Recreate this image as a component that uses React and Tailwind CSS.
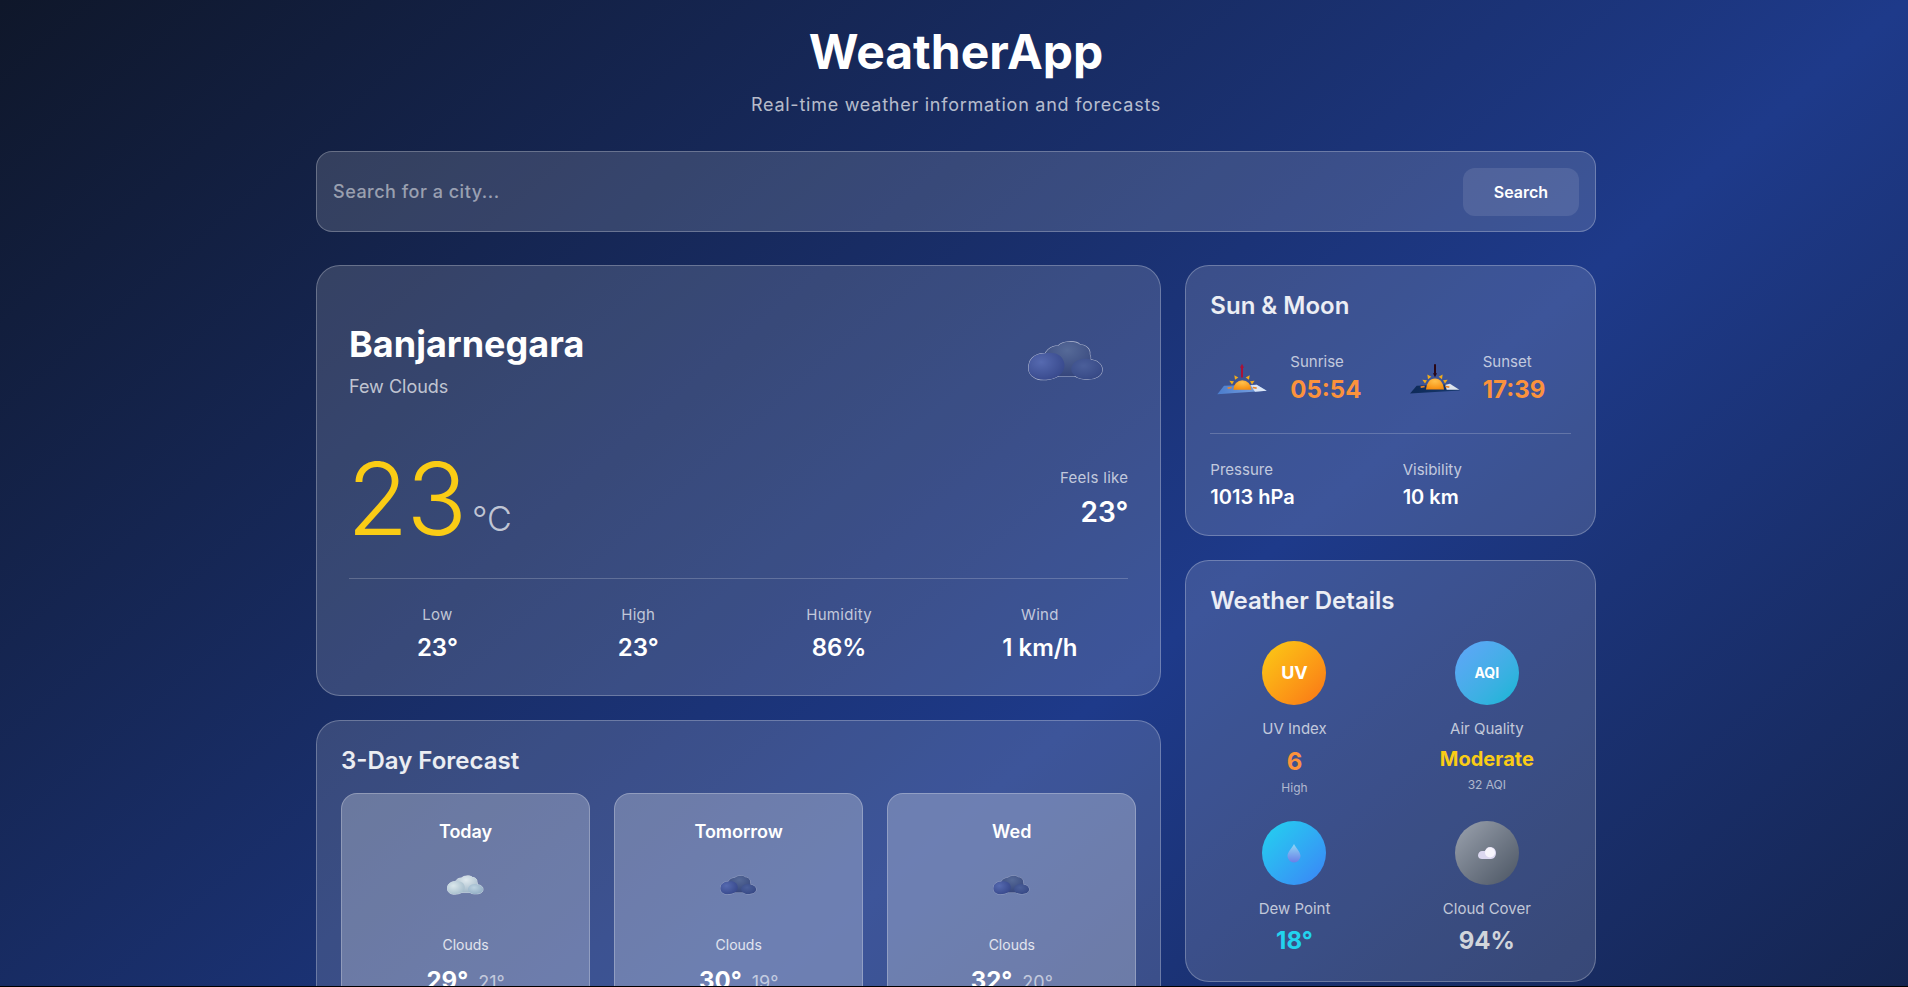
import React from "react";

const font = { fontFamily: "Inter, 'Liberation Sans', sans-serif" };

function Cloud({ kind = "dark", size = 80, className = "" }) {
  const id = "cl" + kind + size;
  const pal =
    kind === "dark"
      ? { t1: "#566a98", t2: "#33437a", l1: "#566ab0", l2: "#36478a", r1: "#4b5f9a", r2: "#354784", s: "#aeb6cf" }
      : { t1: "#dfe9ee", t2: "#9db4c5", l1: "#dbe8ec", l2: "#a3bbca", r1: "#bcd2e0", r2: "#8fabc2", s: "#e6ecf1" };
  const top = "M17 22 C16 12 24 6 32 6 C36 1 50 0 55 5 C61 5 66 10 65 15 C67 19 66 24 62 26 L50 38 L30 38 Z";
  const left = "M1 26 C2 18 10 14 18 14 C26 12 35 15 37 21 C40 26 38 34 33 37 C27 42 12 44 6 39 C1 36 0 31 1 26 Z";
  const right = "M47 26 C50 20 60 18 68 21 C74 22 79 27 78 32 C78 37 72 41 64 41 C56 42 49 39 47 35 C45 32 45 29 47 26 Z";
  return (
    <svg width={size} height={size * 0.55} viewBox="0 0 80 44" className={className}>
      <defs>
        <radialGradient id={id + "t"} cx="50%" cy="25%" r="80%">
          <stop offset="0%" stopColor={pal.t1} />
          <stop offset="100%" stopColor={pal.t2} />
        </radialGradient>
        <radialGradient id={id + "l"} cx="35%" cy="35%" r="75%">
          <stop offset="0%" stopColor={pal.l1} />
          <stop offset="100%" stopColor={pal.l2} />
        </radialGradient>
        <radialGradient id={id + "r"} cx="40%" cy="35%" r="75%">
          <stop offset="0%" stopColor={pal.r1} />
          <stop offset="100%" stopColor={pal.r2} />
        </radialGradient>
      </defs>
      <g stroke={pal.s} strokeWidth="1.1" fill={pal.s}>
        <path d={top} />
        <path d={left} />
        <path d={right} />
      </g>
      <path d={top} fill={`url(#${id}t)`} />
      <path d={right} fill={`url(#${id}r)`} />
      <path d={left} fill={`url(#${id}l)`} />
    </svg>
  );
}

function SunIcon({ type }) {
  const rise = type === "rise";
  const id = "sun" + type;
  return rise ? (
    <svg width="64" height="40" viewBox="30 46.500 192 120">
      <defs>
        <linearGradient id={id + "g"} x1="0" y1="0" x2="1" y2="0">
          <stop offset="0%" stopColor="#4a7ccc" />
          <stop offset="100%" stopColor="#82a8e4" />
        </linearGradient>
        <radialGradient id={id + "s"} cx="50%" cy="25%" r="80%">
          <stop offset="0%" stopColor="#ffc04a" />
          <stop offset="100%" stopColor="#f58a0b" />
        </radialGradient>
      </defs>
      <path d="M52 155 L72 130 L170 127 L200 145 Z" fill={`url(#${id}g)`} />
      <path d="M152 128 L170 127 L200 145 L165 148 Z" fill="#dbe6f6" />
      <path d="M100 142 A27 29 0 0 1 154 142 Z" fill={`url(#${id}s)`} />
      <path d="M103 98 L115 105 L105 112 Z M149 98 L137 105 L147 112 Z M88 115 L102 116 L96 126 Z M164 115 L150 116 L156 126 Z" fill="#f0ac1d" />
      <path d="M83 137 L95 135 M170 137 L158 135" stroke="#e8852b" strokeWidth="5" />
      <path d="M126 105 L126 72" stroke="#a81238" strokeWidth="6" />
      <path d="M120 76 L126 64 L132 76 Z" fill="#a81238" />
    </svg>
  ) : (
    <svg width="64" height="40" viewBox="9 46.500 192 120">
      <defs>
        <linearGradient id={id + "g"} x1="0" y1="0" x2="1" y2="0">
          <stop offset="0%" stopColor="#0e2a58" />
          <stop offset="100%" stopColor="#17396f" />
        </linearGradient>
        <radialGradient id={id + "s"} cx="50%" cy="25%" r="80%">
          <stop offset="0%" stopColor="#ffc04a" />
          <stop offset="100%" stopColor="#f58a0b" />
        </radialGradient>
      </defs>
      <path d="M30 153 L50 130 L150 125 L180 144 Z" fill={`url(#${id}g)`} />
      <path d="M136 127 L150 124 L178 142 L140 142 Z" fill="#dfe5ee" />
      <path d="M78 141 A27 33 0 0 1 132 141 Z" fill={`url(#${id}s)`} />
      <path d="M82 96 L94 103 L84 110 Z M128 96 L116 103 L126 110 Z M67 112 L81 113 L75 123 Z M143 112 L129 113 L135 123 Z" fill="#f0ac1d" />
      <path d="M62 134 L74 132 M148 134 L136 132" stroke="#e8852b" strokeWidth="5" />
      <path d="M105 65 L105 94" stroke="#2a0614" strokeWidth="6" />
      <path d="M99 92 L105 104 L111 92 Z" fill="#2a0614" />
    </svg>
  );
}

function Stat({ label, value }) {
  return (
    <div className="text-center">
      <div className="text-[15px] leading-6 tracking-[0.3px] text-white/70">{label}</div>
      <div className="mt-[5px] text-2xl leading-8 font-semibold text-white">{value}</div>
    </div>
  );
}

function Day({ day, kind, hi, lo }) {
  return (
    <div className="h-[220px] rounded-2xl border border-white/25 bg-white/25 pt-[24px] text-center">
      <div className="text-lg leading-7 font-semibold text-white">{day}</div>
      <div className="mt-[29px] flex h-5 items-center justify-center">
        <Cloud kind={kind} size={37} />
      </div>
      <div className="mt-[40px] text-sm leading-5 text-white/80">Clouds</div>
      <div className="mt-[10px] flex items-baseline justify-center gap-[10px]">
        <span className="text-2xl leading-8 font-bold text-white">{hi}</span>
        <span className="text-lg leading-7 text-white/60">{lo}</span>
      </div>
    </div>
  );
}

export default function App() {
  return (
    <div className="h-[987px] overflow-hidden bg-black" style={font}>
      <div className="h-[986px] overflow-hidden bg-[linear-gradient(to_bottom_right,#0f172a,#1e3a8a_50%,#0f172a)] bg-[length:100%_1650px] bg-no-repeat pl-1">
        <div className="mx-auto w-[1280px]">
          <header className="pt-[28px] text-center">
            <h1 className="text-5xl leading-[48px] font-bold text-white">WeatherApp</h1>
            <p className="mt-[15px] text-lg leading-7 tracking-[0.75px] text-white/70">Real-time weather information and forecasts</p>
          </header>

          <div className="mt-8 flex h-[81px] items-center rounded-2xl border border-white/25 bg-white/[0.14] px-4">
            <input
              placeholder="Search for a city..."
              className="min-w-0 flex-1 bg-transparent text-lg font-medium tracking-[0.5px] text-white outline-none placeholder:text-white/50"
            />
            <button className="h-12 w-[116px] rounded-xl bg-white/10 text-base font-semibold text-white">Search</button>
          </div>

          <div className="mt-[33px] grid grid-cols-3 gap-6">
            <div className="col-span-2 flex flex-col gap-6">
              <section className="h-[431px] rounded-3xl border border-white/25 bg-white/[0.14] px-8 pt-[58px]">
                <div className="flex items-start justify-between">
                  <div>
                    <h2 className="text-4xl leading-10 font-bold text-white">Banjarnegara</h2>
                    <p className="mt-[9px] text-lg leading-7 text-white/70">Few Clouds</p>
                  </div>
                  <Cloud kind="dark" size={76} className="mt-[16px] mr-[24px]" />
                </div>
                <div className="mt-[48px] flex items-end justify-between">
                  <div className="-ml-[2px] flex items-end">
                    <span className="text-[100px] leading-[100px] font-light tracking-[-2px] text-[#facc15]">23</span>
                    <span className="mb-[10px] ml-[7px] text-[34px] leading-10 font-light text-white/70">°C</span>
                  </div>
                  <div className="mb-[19px] text-right">
                    <div className="text-[15px] leading-6 tracking-[0.3px] text-white/70">Feels like</div>
                    <div className="mt-1 text-[28px] leading-9 font-semibold text-white">23°</div>
                  </div>
                </div>
                <div className="mt-[29px] grid grid-cols-4 gap-6 border-t border-white/20 pt-[24px]">
                  <Stat label="Low" value="23°" />
                  <Stat label="High" value="23°" />
                  <Stat label="Humidity" value="86%" />
                  <Stat label="Wind" value="1 km/h" />
                </div>
              </section>

              <section className="rounded-3xl border border-white/25 bg-white/[0.14] px-6 pt-[24px]">
                <h3 className="text-2xl leading-8 font-semibold text-white/90">3-Day Forecast</h3>
                <div className="mt-[16px] grid grid-cols-3 gap-6">
                  <Day day="Today" kind="light" hi="29°" lo="21°" />
                  <Day day="Tomorrow" kind="dark" hi="30°" lo="19°" />
                  <Day day="Wed" kind="dark" hi="32°" lo="20°" />
                </div>
              </section>
            </div>

            <div className="flex flex-col gap-6">
              <section className="h-[271px] rounded-3xl border border-white/25 bg-white/[0.14] px-6 pt-[24px]">
                <h3 className="text-2xl leading-8 font-semibold text-white/90">Sun &amp; Moon</h3>
                <div className="mt-[28px] grid grid-cols-2 gap-6">
                  <div className="flex items-center gap-4">
                    <SunIcon type="rise" />
                    <div>
                      <div className="text-[15px] leading-6 text-white/70">Sunrise</div>
                      <div className="text-2xl leading-8 font-bold text-[#fb923c]">05:54</div>
                    </div>
                  </div>
                  <div className="flex items-center gap-4">
                    <SunIcon type="set" />
                    <div>
                      <div className="text-[15px] leading-6 text-white/70">Sunset</div>
                      <div className="text-2xl leading-8 font-bold text-[#fb923c]">17:39</div>
                    </div>
                  </div>
                </div>
                <div className="mt-[27px] grid grid-cols-2 gap-6 border-t border-white/20 pt-[24px]">
                  <div>
                    <div className="text-[15px] leading-6 text-white/70">Pressure</div>
                    <div className="mt-[1px] text-xl leading-7 font-semibold text-white">1013 hPa</div>
                  </div>
                  <div>
                    <div className="text-[15px] leading-6 text-white/70">Visibility</div>
                    <div className="mt-[1px] text-xl leading-7 font-semibold text-white">10 km</div>
                  </div>
                </div>
              </section>

              <section className="h-[422px] rounded-3xl border border-white/25 bg-white/[0.14] px-6 pt-[24px]">
                <h3 className="text-2xl leading-8 font-semibold text-white/90">Weather Details</h3>
                <div className="mt-[24px] grid grid-cols-2 gap-x-6">
                  <div className="h-[180px] text-center">
                    <div className="mx-auto flex h-16 w-16 items-center justify-center rounded-full bg-gradient-to-br from-[#facc15] to-[#f97316] text-lg font-bold text-white">UV</div>
                    <div className="mt-[12px] text-[15px] leading-6 text-white/70">UV Index</div>
                    <div className="mt-[5px] text-2xl leading-8 font-bold text-[#fb923c]">6</div>
                    <div className="mt-[2px] text-xs leading-4 text-white/60">High</div>
                  </div>
                  <div className="h-[180px] text-center">
                    <div className="mx-auto flex h-16 w-16 items-center justify-center rounded-full bg-gradient-to-br from-[#60a5fa] to-[#06b6d4] text-sm font-bold text-white">AQI</div>
                    <div className="mt-[12px] text-[15px] leading-6 text-white/70">Air Quality</div>
                    <div className="mt-[4px] text-xl leading-7 font-bold text-[#facc15]">Moderate</div>
                    <div className="mt-[4px] text-xs leading-4 text-white/60">32 AQI</div>
                  </div>
                  <div className="text-center">
                    <div className="mx-auto flex h-16 w-16 items-center justify-center rounded-full bg-gradient-to-br from-[#22d3ee] to-[#3b82f6]">
                      <svg width="14" height="20" viewBox="0 0 14 20">
                        <defs>
                          <linearGradient id="drop" x1="0" y1="0" x2="0" y2="1">
                            <stop offset="0%" stopColor="#8fd8f5" />
                            <stop offset="100%" stopColor="#6a7fe8" />
                          </linearGradient>
                        </defs>
                        <path d="M7 1 C9 5 13.500 9 13.500 13 A6.500 6.500 0 0 1 0.500 13 C0.500 9 5 5 7 1 Z" fill="url(#drop)" />
                      </svg>
                    </div>
                    <div className="mt-[12px] text-[15px] leading-6 text-white/70">Dew Point</div>
                    <div className="mt-[4px] text-2xl leading-8 font-bold text-[#22d3ee]">18°</div>
                  </div>
                  <div className="text-center">
                    <div className="mx-auto flex h-16 w-16 items-center justify-center rounded-full bg-gradient-to-br from-[#9ca3af] to-[#4b5563]">
                      <svg width="20" height="14" viewBox="0 0 20 14">
                        <path d="M5 5 C3 5 1 7 1 9.500 C1 12 3 13 5 13 L14 13 C17 13 19 10 19 7 C19 3 16 1 13 1 C10 1 9 3 8 5 Z" fill="#dcd8f0" />
                        <circle cx="13" cy="6.500" r="5" fill="#f7f5fc" />
                      </svg>
                    </div>
                    <div className="mt-[12px] text-[15px] leading-6 text-white/70">Cloud Cover</div>
                    <div className="mt-[4px] text-2xl leading-8 font-bold text-[#d1d5db]">94%</div>
                  </div>
                </div>
              </section>
            </div>
          </div>
        </div>
      </div>
    </div>
  );
}
